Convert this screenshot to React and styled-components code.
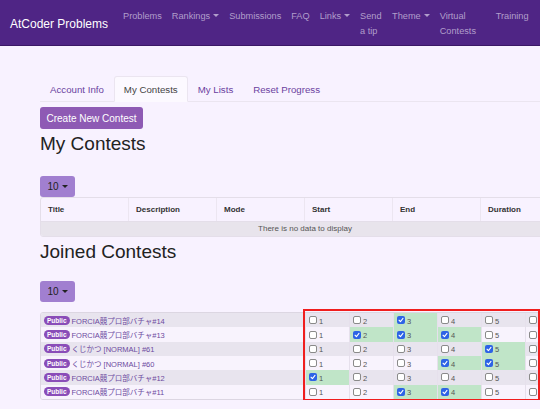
import React from 'react'
import styled, { createGlobalStyle, css } from 'styled-components'

const GlobalStyle = createGlobalStyle`
  body {
    margin: 0;
    background: #f8f2ff;
    font-family: "Liberation Sans", Arial, "Noto Sans CJK JP", sans-serif;
    overflow: hidden;
  }
`

const navItems = [
  { label: 'Problems' },
  { label: 'Rankings', caret: true },
  { label: 'Submissions' },
  { label: 'FAQ' },
  { label: 'Links', caret: true },
  { label: 'Send a tip', width: 22 },
  { label: 'Theme', caret: true },
  { label: 'Virtual Contests', width: 46 },
  { label: 'Training' },
]

const contestCols = ['Title', 'Description', 'Mode', 'Start', 'End', 'Duration']

const joined = [
  { title: 'FORCIA競プロ部バチャ#14', done: [3] },
  { title: 'FORCIA競プロ部バチャ#13', done: [2, 3, 4] },
  { title: 'くじかつ [NORMAL] #61', done: [5] },
  { title: 'くじかつ [NORMAL] #60', done: [4, 5] },
  { title: 'FORCIA競プロ部バチャ#12', done: [1] },
  { title: 'FORCIA競プロ部バチャ#11', done: [3, 4] },
]

function App() {
  return (
    <>
      <GlobalStyle />
      <Navbar>
        <Brand>AtCoder Problems</Brand>
        <NavList>
          {navItems.map((item) => (
            <NavLink key={item.label} $width={item.width}>
              {item.label}
              {item.caret && <Caret />}
            </NavLink>
          ))}
        </NavList>
      </Navbar>

      <Main>
        <Tabs>
          <Tab>Account Info</Tab>
          <Tab $active>My Contests</Tab>
          <Tab>My Lists</Tab>
          <Tab>Reset Progress</Tab>
        </Tabs>
        <CreateButton>Create New Contest</CreateButton>
        <Heading>My Contests</Heading>
        <SizeButton $top={20}>10<Caret $dark /></SizeButton>
        <ContestTable>
          <HeadRow>
            {contestCols.map((c) => (
              <HeadCell key={c}>{c}</HeadCell>
            ))}
          </HeadRow>
          <EmptyRow>There is no data to display</EmptyRow>
        </ContestTable>

        <Heading $top={4}>Joined Contests</Heading>
        <SizeButton $top={17}>10<Caret $dark /></SizeButton>
        <JoinedWrap>
          <JoinedTable>
            {joined.map((row, i) => (
              <JoinedRow key={row.title} $odd={i % 2 === 0}>
                <TitleCell>
                  <Badge>Public</Badge>
                  <TitleLink>{row.title}</TitleLink>
                </TitleCell>
                {[1, 2, 3, 4, 5, 6].map((n) => {
                  const on = row.done.includes(n)
                  return (
                    <CheckCell key={n} $on={on}>
                      <Box $on={on}>
                        {on && (
                          <svg width="6" height="6" viewBox="0 0 10 10">
                            <path d="M1.8 5.4 L4.1 7.6 L8.3 2.4" fill="none" stroke="#fff" strokeWidth="1.8" strokeLinecap="round" strokeLinejoin="round" />
                          </svg>
                        )}
                      </Box>
                      {n < 6 && <Num>{n}</Num>}
                    </CheckCell>
                  )
                })}
              </JoinedRow>
            ))}
          </JoinedTable>
          <Highlight />
        </JoinedWrap>
      </Main>
    </>
  )
}

export default App

const Navbar = styled.nav`
  display: flex;
  align-items: center;
  height: 45px;
  padding: 0 10px;
  background: #4f2585;
  border-bottom: 1px solid #3b1866;
  white-space: nowrap;
`
const Brand = styled.div`
  color: #fff;
  font-size: 12px;
  margin-right: 10px;
  margin-top: 2px;
`
const NavList = styled.div`
  display: flex;
  align-self: flex-start;
  align-items: flex-start;
  margin-top: 9px;
`
const NavLink = styled.div`
  padding: 0 5px;
  font-size: 9.2px;
  line-height: 15px;
  color: #b19ecb;
  ${(p) =>
    p.$width &&
    css`
      width: ${p.$width}px;
      white-space: normal;
    `}
`
const Caret = styled.span`
  display: inline-block;
  margin-left: 3px;
  vertical-align: 2px;
  border-top: 3.5px solid ${(p) => (p.$dark ? '#222' : '#b19ecb')};
  border-left: 3px solid transparent;
  border-right: 3px solid transparent;
`
const Main = styled.main`
  padding-left: 40px;
  width: 530px;
`
const Tabs = styled.div`
  display: flex;
  margin-top: 30px;
  border-bottom: 1px solid #ebe5f0;
`
const Tab = styled.div`
  padding: 0 9px;
  height: 24px;
  line-height: 25px;
  font-size: 9.7px;
  color: #6b3fa0;
  border: 1px solid transparent;
  border-radius: 3px 3px 0 0;
  margin-bottom: -1px;
  ${(p) =>
    p.$active &&
    css`
      color: #444;
      background: #fcf9ff;
      border-color: #ebe5f0 #ebe5f0 #fcf9ff;
    `}
`
const CreateButton = styled.div`
  display: inline-flex;
  align-items: center;
  margin-top: 5px;
  height: 22px;
  padding: 0 6.5px;
  font-size: 10px;
  color: #fff;
  background: #8e5ab4;
  border-radius: 3px;
`
const Heading = styled.h2`
  margin: ${(p) => p.$top ?? 4}px 0 0;
  font-size: 19px;
  font-weight: 400;
  line-height: 1.2;
  color: #222;
`
const SizeButton = styled.div`
  display: flex;
  align-items: center;
  justify-content: center;
  margin-top: ${(p) => p.$top}px;
  width: 35px;
  height: 21.5px;
  font-size: 10px;
  color: #222;
  background: #a17fd0;
  border-radius: 3px;
`
const ContestTable = styled.div`
  border: 1px solid #e4dee9;
  border-radius: 3px;
  overflow: hidden;
`
const HeadRow = styled.div`
  display: grid;
  grid-template-columns: repeat(6, 1fr);
  height: 22.5px;
  border-bottom: 1px solid #e4dee9;
`
const HeadCell = styled.div`
  display: flex;
  align-items: center;
  padding-left: 7px;
  font-size: 8px;
  font-weight: 700;
  color: #333;
  border-right: 1px solid #ece6f1;
`
const EmptyRow = styled.div`
  height: 14px;
  line-height: 14px;
  text-align: center;
  font-size: 8px;
  color: #555;
  background: #e8e4ec;
`
const JoinedWrap = styled.div`
  position: relative;
  margin-top: 10px;
`
const JoinedTable = styled.div`
  border: 1px solid #dcd6e2;
  border-radius: 3px;
  overflow: hidden;
`
const JoinedRow = styled.div`
  display: grid;
  grid-template-columns: 264px repeat(6, 1fr);
  height: 14.3px;
  background: ${(p) => (p.$odd ? '#e8e4ee' : '#f8f3fd')};
`
const TitleCell = styled.div`
  display: flex;
  align-items: center;
  gap: 2px;
  padding-left: 3px;
  white-space: nowrap;
`
const Badge = styled.span`
  display: inline-flex;
  align-items: center;
  height: 9px;
  padding: 0 3px;
  border-radius: 5px;
  background: #8a4db8;
  color: #fff;
  font-size: 6.5px;
  font-weight: 700;
`
const TitleLink = styled.span`
  font-size: 7.5px;
  color: #6d4a9f;
`
const CheckCell = styled.div`
  display: flex;
  align-items: center;
  padding-left: 3px;
  border-left: 1px solid #e6e0ec;
  background: ${(p) => (p.$on ? '#c0e5c8' : 'transparent')};
`
const Box = styled.span`
  display: inline-flex;
  align-items: center;
  justify-content: center;
  box-sizing: border-box;
  width: 8px;
  height: 8px;
  border-radius: 2px;
  border: ${(p) => (p.$on ? 'none' : '1px solid #8a8a8a')};
  background: ${(p) => (p.$on ? '#2d63e6' : '#fff')};
`
const Num = styled.span`
  margin-left: 2px;
  margin-top: 2px;
  font-size: 7.5px;
  color: #555;
`
const Highlight = styled.div`
  position: absolute;
  left: 262.5px;
  top: -3.5px;
  width: 237px;
  height: 92.5px;
  box-sizing: border-box;
  border: 2.5px solid #f01e1e;
  pointer-events: none;
`
